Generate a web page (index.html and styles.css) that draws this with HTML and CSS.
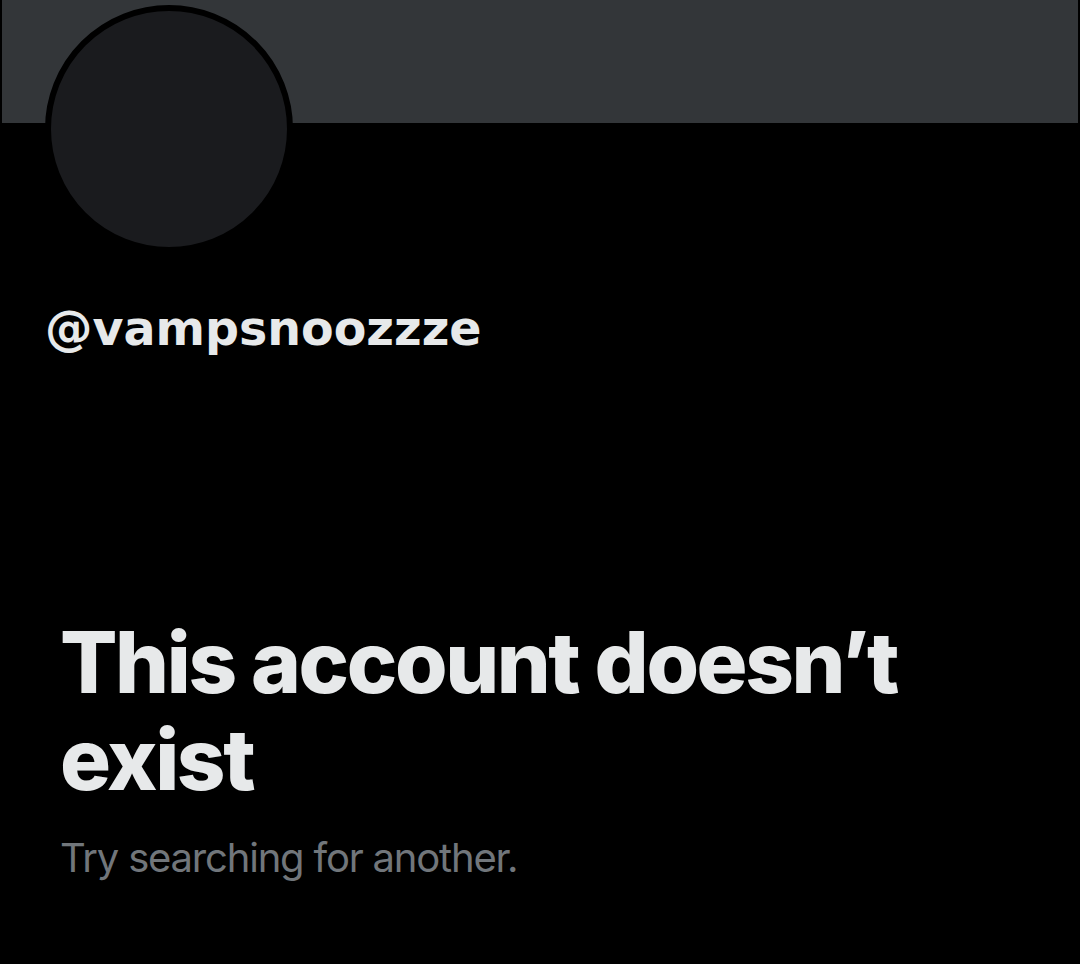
FILE: index.html
```html
<!DOCTYPE html>
<html lang="en">
<head>
    <meta charset="UTF-8">
    <meta name="viewport" content="width=device-width, initial-scale=1.0">
    <title>@vampsnoozzze</title>
    <link rel="stylesheet" href="styles.css">
</head>
<body>
    <div class="banner"></div>
    <div class="profile">
        <div class="avatar"></div>
        <div class="handle">@vampsnoozzze</div>
    </div>
    <div class="empty-state">
        <h1>This account doesn’t exist</h1>
        <p>Try searching for another.</p>
    </div>
</body>
</html>
```

FILE: styles.css
```css
* {
    box-sizing: border-box;
}
body {
    margin: 0;
    background: #000;
    color: #e7e9ea;
    font-family: Inter, "Noto Sans", sans-serif;
}
.banner {
    height: 123px;
    margin: 0 2px;
    background-color: #333639;
}
.profile {
    padding: 0 45px;
}
.avatar {
    width: 248px;
    height: 248px;
    margin-top: -118px;
    border: 6px solid #000;
    border-radius: 50%;
    background-color: #1a1b1e;
}
.handle {
    margin-top: 50px;
    font-family: "DejaVu Sans", sans-serif;
    font-size: 47.5px;
    font-weight: 700;
    line-height: 52px;
}
.empty-state {
    padding: 0 60px;
    margin-top: 259px;
}
h1 {
    margin: 0;
    font-size: 85px;
    font-weight: 800;
    line-height: 97px;
    letter-spacing: -2.4px;
}
p {
    margin: 26px 0 0;
    font-size: 40px;
    line-height: 48px;
    letter-spacing: -1.2px;
    color: #71767b;
}
```
